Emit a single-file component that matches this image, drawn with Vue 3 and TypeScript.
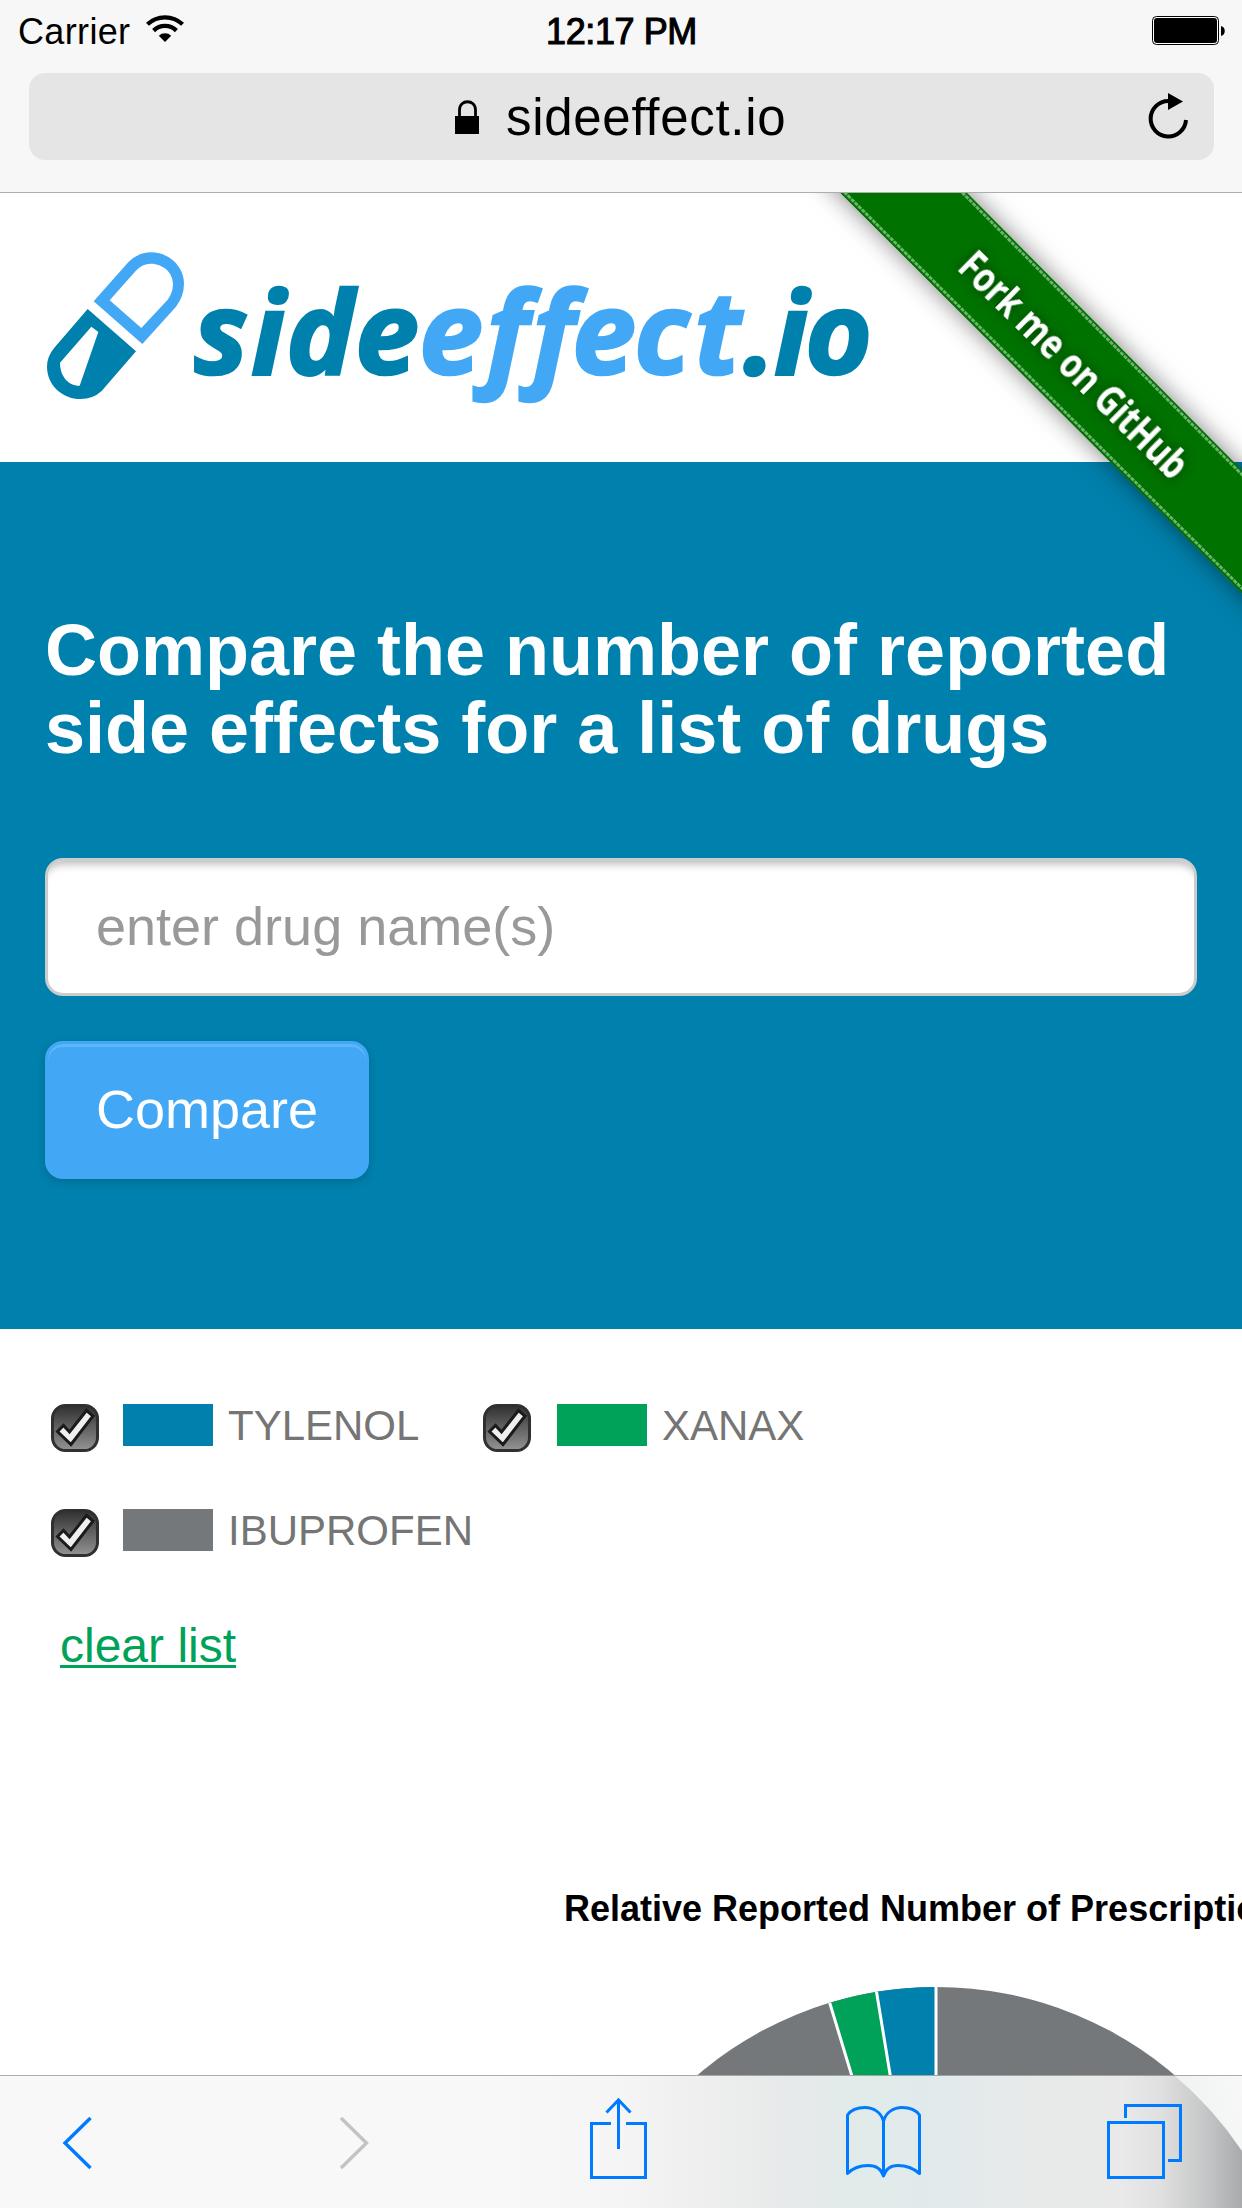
<script setup lang="ts">
interface Drug {
  name: string
  color: string
}

const drugs: Drug[] = [
  { name: 'TYLENOL', color: '#0080ac' },
  { name: 'XANAX', color: '#00a259' },
  { name: 'IBUPROFEN', color: '#74787b' },
]
</script>

<template>
  <div class="screen">
    <header class="browser">
      <div class="status">
        <div class="carrier">
          <span>Carrier</span>
          <svg class="wifi" width="38" height="28" viewBox="0 0 38 28">
            <g fill="none" stroke="#000" stroke-width="4.3">
              <path d="M1.4 9.3A25.6 25.6 0 0 1 36.6 9.3" />
              <path d="M7.6 15.6A16.2 16.2 0 0 1 30.4 15.6" />
            </g>
            <path d="M19 27L12.8 20.8A9 9 0 0 1 25.2 20.8Z" />
          </svg>
        </div>
        <span class="clock">12:17 PM</span>
        <svg class="battery" width="74" height="30" viewBox="0 0 74 30">
          <rect x=".5" y=".5" width="66" height="28" rx="4" fill="#fff" stroke="#000" />
          <rect x="2" y="2" width="63" height="25" rx="3" />
          <path d="M69 10c5 1 5 9 0 10z" />
        </svg>
      </div>
      <div class="address">
        <svg class="lock" width="24" height="34" viewBox="0 0 24 34">
          <path d="M4.5 17V10C4.5-1 20.5-1 20.5 10V17" fill="none" stroke="#000" stroke-width="2.8" />
          <rect y="16" width="24" height="18" />
        </svg>
        <span class="url">sideeffect.io</span>
        <svg class="reload" width="42" height="48" viewBox="0 0 42 48">
          <path d="M20.3 8A17.7 17.7 0 1 0 38 27" fill="none" stroke="#000" stroke-width="4" />
          <path d="M20 0L35 8.5 20 17Z" />
        </svg>
      </div>
    </header>

    <div class="brand">
      <svg width="860" height="190" viewBox="30 230 860 190">
        <g transform="translate(30 230) scale(.33333)" fill-rule="evenodd">
          <path
            fill="#42a8f6"
            d="M191 214L290 102Q321 67 363 67C417 67 462 109 462 160Q462 200 438 230L337 342ZM239 211L334 294 413 209Q429 188 429 163C429 127 399 101 362 101Q337 101 317 123Z"
          />
          <path
            fill="#0080ac"
            d="M173 237L318 364 215 483Q189 507 152 507C96 507 51 464 51 410Q51 379 73 353ZM184 290L90 398C90 436 112 467 149 467L205 306Z"
          />
        </g>
        <text class="logo" y="374">
          <tspan class="dark" x="194 251 286 355">side</tspan>
          <tspan class="light" x="419 486 532 572 634 694">effect</tspan>
          <tspan class="dark" x="743 774 805">.io</tspan>
        </text>
      </svg>
    </div>

    <section class="hero">
      <h1>Compare the number of reported<br />side effects for a list of drugs</h1>
      <input type="text" placeholder="enter drug name(s)" />
      <button type="button">Compare</button>
    </section>

    <section class="legend">
      <label v-for="drug in drugs" :key="drug.name" class="drug">
        <svg width="48" height="48" viewBox="0 0 48 48">
          <defs>
            <linearGradient id="box" x1="0" y1="0" x2="0" y2="1">
              <stop offset="0" stop-color="#303030" />
              <stop offset="1" stop-color="#949494" />
            </linearGradient>
          </defs>
          <rect x="1.5" y="1.5" width="45" height="45" rx="13" fill="url(#box)" stroke="#303030" stroke-width="3" />
          <path
            d="M6.5 27.5L12.5 21.500 18.500 28 35.500 6.500 42 12 20 40.500Z"
            fill="#f0f0f0"
            stroke="#1b1b1b"
            stroke-width="3"
          />
        </svg>
        <i class="swatch" :style="{ background: drug.color }"></i>
        <span>{{ drug.name }}</span>
      </label>
    </section>
    <a class="clear">clear list</a>

    <svg class="chart" width="682" height="340" viewBox="560 1868 682 340">
      <text x="564" y="1921">Relative Reported Number of Prescriptions</text>
      <circle cx="936" cy="2354" r="367" fill="#74787b" />
      <path d="M936 2354L829.7 2002.700A367 367 0 0 1 876.5 1991.800Z" fill="#00a259" />
      <path d="M936 2354L876.5 1991.800A367 367 0 0 1 936 1987Z" fill="#0080ac" />
      <path d="M829.7 2002.700L936 2354L876.5 1991.800M936 2354V1986" fill="none" stroke="#fff" stroke-width="3" />
    </svg>

    <svg class="ribbon" width="442" height="460" viewBox="800 193 442 460">
      <defs>
        <filter id="shade" x="-30%" y="-30%" width="160%" height="160%">
          <feDropShadow dx="0" dy="0" stdDeviation="12" flood-color="#000" flood-opacity=".5" />
        </filter>
        <filter id="glow" x="-20%" y="-60%" width="140%" height="220%">
          <feDropShadow dx="0" dy="0" stdDeviation="6" flood-color="#000" flood-opacity=".5" />
        </filter>
      </defs>
      <path d="M740 93L1340 691V569L868 93Z" fill="#007200" filter="url(#shade)" />
      <g fill="none" stroke="#6fb26f" stroke-width="2.800" stroke-dasharray="4 1">
        <path d="M745 93L1340 686M863.500 93L1340 573.500" />
      </g>
      <text class="fork" transform="translate(956 269) rotate(44.600)" textLength="303" lengthAdjust="spacingAndGlyphs" filter="url(#glow)">Fork me on GitHub</text>
    </svg>

    <nav class="toolbar">
      <svg width="1242" height="133" viewBox="0 2075 1242 133">
        <defs>
          <linearGradient id="bar" gradientUnits="userSpaceOnUse" x1="500" y1="2075" x2="1242" y2="2075">
            <stop offset="0" stop-color="#f8f8f8" />
            <stop offset=".16" stop-color="#f5f5f5" />
            <stop offset=".28" stop-color="#eeeeee" />
            <stop offset=".39" stop-color="#e7eaea" />
            <stop offset=".5" stop-color="#e0ebea" />
            <stop offset=".6" stop-color="#e2eaeb" />
            <stop offset=".72" stop-color="#e8eaea" />
            <stop offset=".84" stop-color="#e9e9e9" />
            <stop offset=".89" stop-color="#e0e0e0" />
            <stop offset=".95" stop-color="#c6c7c8" />
            <stop offset="1" stop-color="#a9aaac" />
          </linearGradient>
          <linearGradient id="corner" gradientUnits="userSpaceOnUse" x1="1174" y1="2100" x2="1242" y2="2080">
            <stop offset="0" stop-color="#eff1f1" />
            <stop offset="1" stop-color="#f8f8f8" />
          </linearGradient>
        </defs>
        <rect y="2075" width="1242" height="133" fill="url(#bar)" />
        <path d="M1174 2075A367 367 0 0 1 1242 2151V2075Z" fill="url(#corner)" />
        <rect y="2075" width="1242" height="1" fill="#000" fill-opacity=".3" />
        <g fill="none" stroke="#007aff" stroke-width="3">
          <path d="M90.500 2118L65 2143L90.500 2168" stroke-width="3.400" />
          <path d="M341 2118L366.500 2143L341 2168" stroke="#c3c3c3" stroke-width="3.400" />
          <path d="M611 2123.500H591.500V2177.500H645.500V2123.500H626" />
          <path d="M618.500 2149V2099.500M606.500 2112.500L618.500 2100L630.500 2112.500" />
          <path
            stroke-linejoin="round"
            d="M883.500 2176V2121C881 2112 873 2107.500 865 2107.500C858 2107.500 851 2110 847.500 2115V2173.500C854 2167 861 2165.500 868 2165.500C875 2165.500 881 2168 883.500 2176C886 2168 891 2165.500 898 2165.500C905 2165.500 912 2167 919.500 2173.500V2115C916 2110 909 2107.500 902 2107.500C894 2107.500 886 2112 883.500 2121"
          />
          <rect x="1108.500" y="2122.500" width="55" height="55" />
          <path d="M1125.500 2118V2105.500H1180.500V2160.500H1168" />
        </g>
      </svg>
    </nav>
  </div>
</template>

<style>
body {
  margin: 0;
}
</style>

<style scoped>
.screen {
  position: relative;
  width: 1242px;
  height: 2208px;
  overflow: hidden;
  background: #fff;
  font-family: 'Liberation Sans', Arial, sans-serif;
}
.browser {
  box-sizing: border-box;
  height: 193px;
  padding: 0 28px 0 29px;
  background: #f7f7f7;
  border-bottom: 1px solid #adadad;
}
.status {
  display: grid;
  grid-template-columns: 1fr auto 1fr;
  height: 73px;
  margin: 0 -12px 0 -12px;
  font-size: 36px;
  line-height: 41px;
}
.carrier {
  display: flex;
  padding: 11px 0 0 1px;
  letter-spacing: 0.35px;
}
.wifi {
  margin: 4px 0 0 16px;
}
.clock {
  padding-top: 11px;
  letter-spacing: -0.4px;
  -webkit-text-stroke: 1.1px #000;
}
.battery {
  justify-self: end;
  margin: 16px 0 0;
}
.address {
  display: grid;
  grid-template-columns: 426px 51px 1fr 75px;
  height: 87px;
  border-radius: 16px;
  background: #e5e5e5;
}
.lock {
  grid-column: 2;
  margin-top: 27px;
}
.url {
  padding-top: 16px;
  font-size: 51px;
  line-height: 58px;
  letter-spacing: 0.7px;
}
.reload {
  margin: 20px 0 0 9px;
}
.brand {
  height: 232px;
  padding: 37px 0 0 30px;
}
.brand svg {
  display: block;
}
.logo {
  font: italic 700 115px 'Open Sans', 'Noto Sans', sans-serif;
  font-variant-ligatures: none;
  stroke-width: 2.5px;
}
.dark {
  fill: #0080ac;
  stroke: #0080ac;
}
.light {
  fill: #42a8f6;
  stroke: #42a8f6;
}
.hero {
  box-sizing: border-box;
  height: 867px;
  padding: 149px 45px 0;
  background: #0080ac;
}
h1 {
  margin: 0;
  color: #fff;
  font-size: 72px;
  line-height: 78px;
  white-space: nowrap;
}
input {
  display: block;
  box-sizing: border-box;
  width: 1152px;
  height: 138px;
  margin-top: 91px;
  padding: 0 48px 2px;
  border: 3px solid #ccc;
  border-radius: 18px;
  background: #fff;
  box-shadow: inset 0 10px 8px -7px rgba(0, 0, 0, 0.28);
  font: 54px 'Liberation Sans', Arial, sans-serif;
}
input::placeholder {
  color: #999;
  opacity: 1;
}
button {
  display: block;
  width: 324px;
  height: 138px;
  margin-top: 45px;
  padding: 0 0 2px;
  border: 3px solid #42a8f6;
  border-radius: 18px;
  background: #42a8f6;
  box-shadow: inset 0 3px 0 rgba(255, 255, 255, 0.15), 0 3px 9px rgba(0, 0, 0, 0.15);
  color: #fff;
  font: 54px 'Liberation Sans', Arial, sans-serif;
}
.legend {
  display: flex;
  flex-wrap: wrap;
  width: 1000px;
  padding: 75px 0 0 51px;
}
.drug {
  display: flex;
  flex: none;
  width: 432px;
  height: 105px;
  color: #757575;
  font-size: 42px;
  line-height: 48px;
}
.drug span {
  margin-top: -2px;
}
.swatch {
  flex: none;
  width: 90px;
  height: 42px;
  margin: 0 15px 0 24px;
}
.drug:nth-child(2) .swatch {
  margin-left: 26px;
}
.clear {
  display: block;
  width: max-content;
  margin: 4px 0 0 60px;
  color: #00a259;
  font-size: 48px;
  line-height: 56px;
  white-space: nowrap;
  text-decoration: underline;
  text-decoration-thickness: 3px;
  text-underline-offset: 3px;
  text-decoration-skip-ink: none;
}
.chart {
  display: block;
  margin: 194px 0 0 560px;
}
.chart text {
  font: bold 36px 'Liberation Sans', Arial, sans-serif;
}
.ribbon {
  position: absolute;
  top: 193px;
  right: 0;
}
.fork {
  fill: #fff;
  font: bold 41px 'Noto Sans', sans-serif;
}
.toolbar {
  position: absolute;
  bottom: 0;
  left: 0;
}
.toolbar svg {
  display: block;
}
</style>
